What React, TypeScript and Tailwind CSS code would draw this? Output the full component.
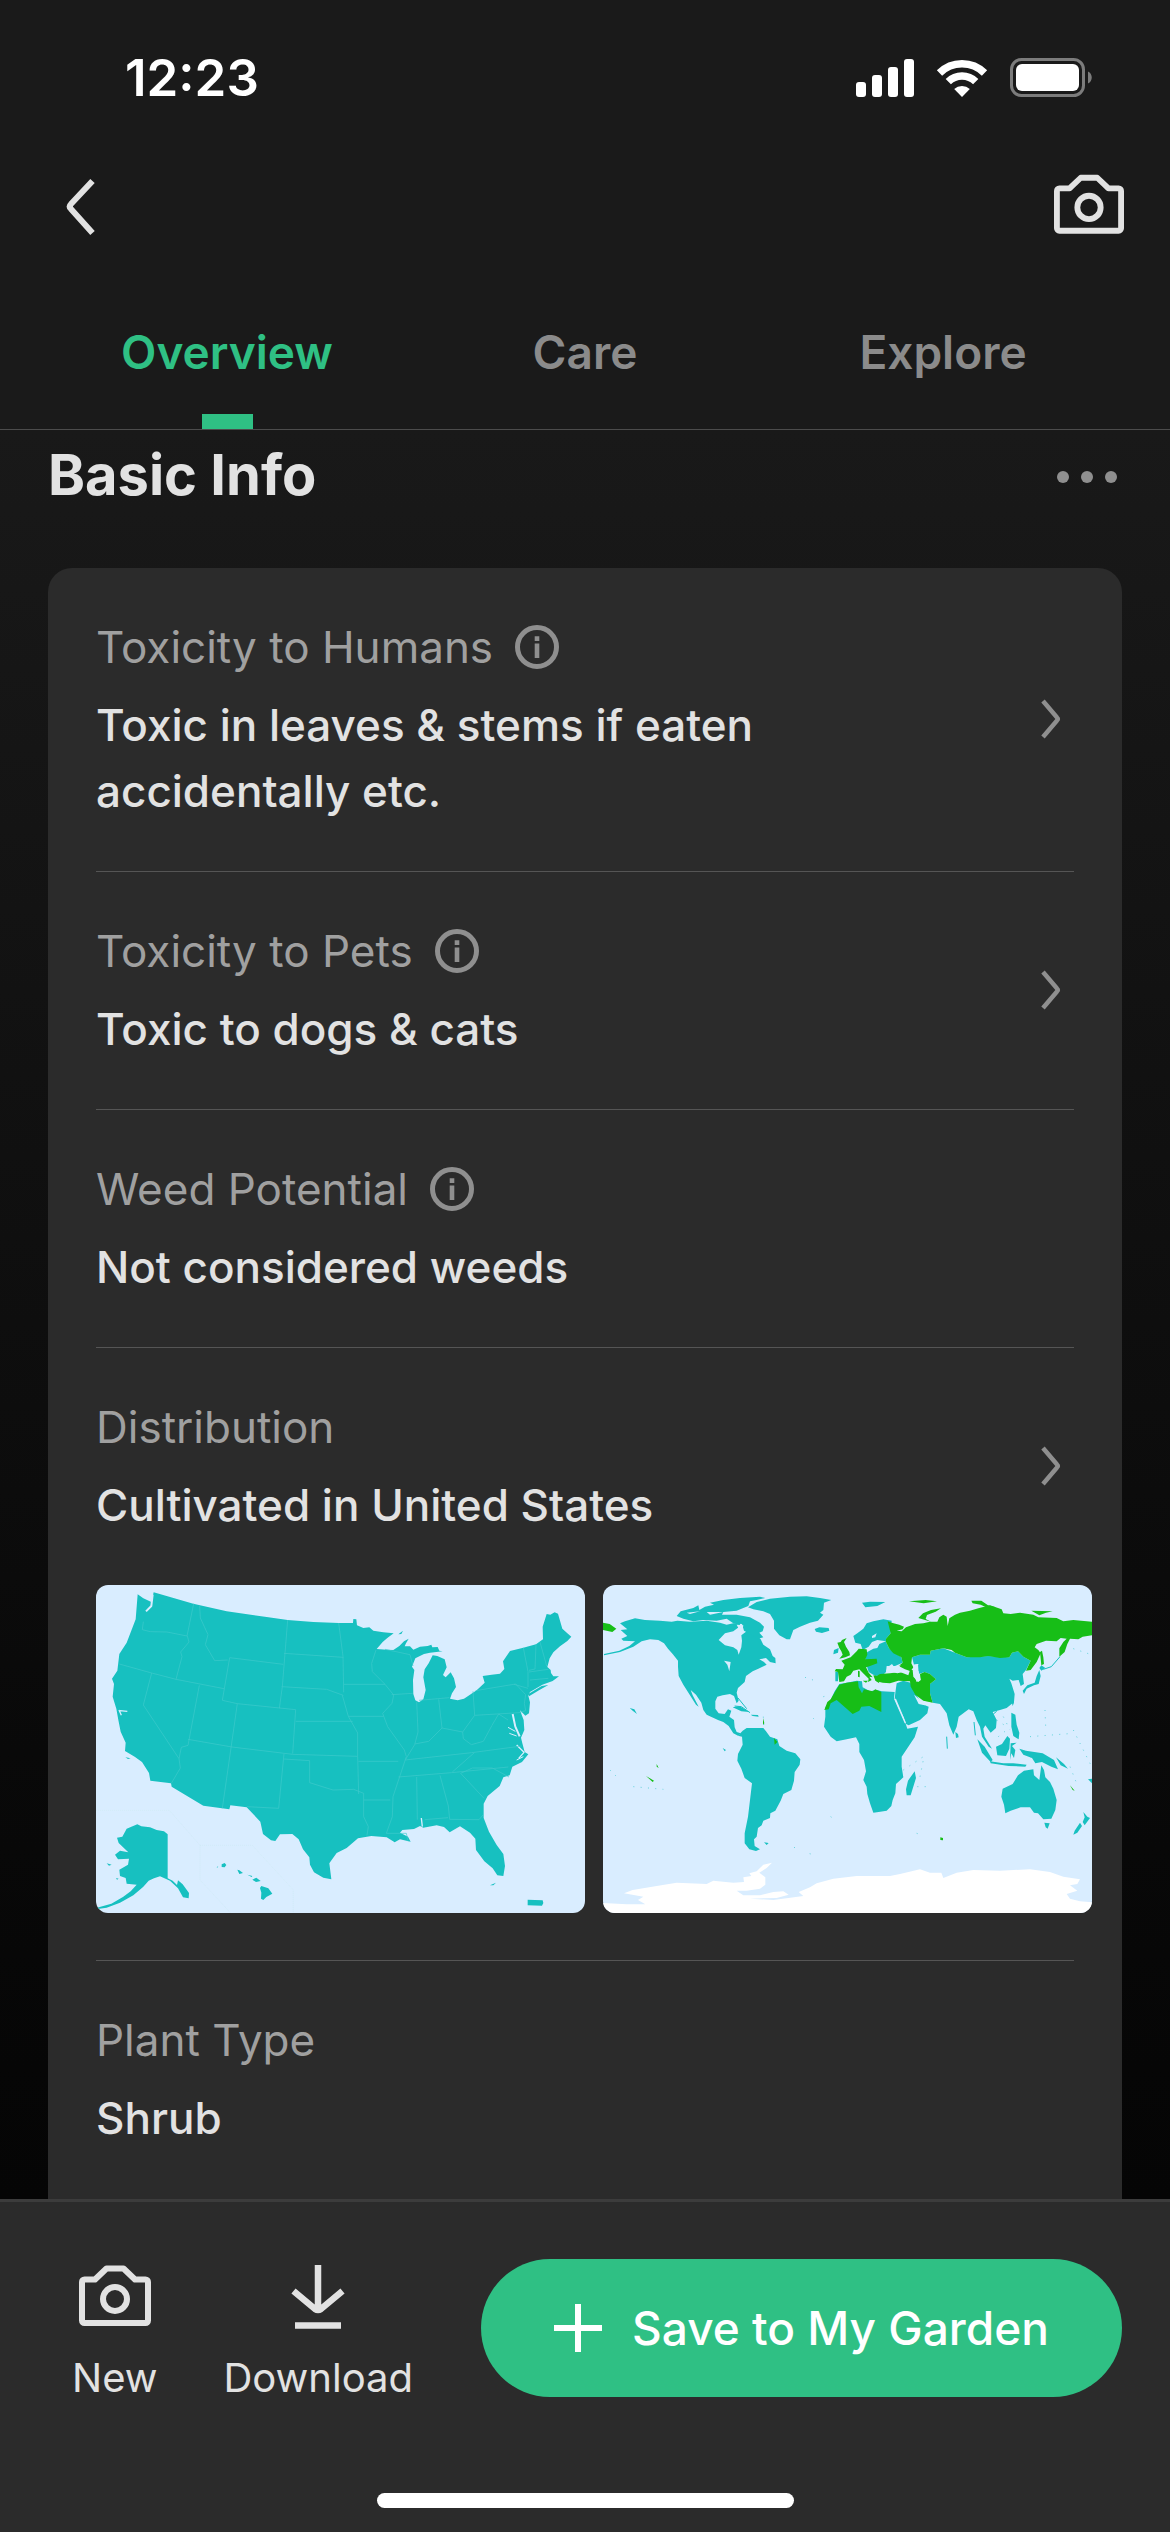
import React from "react";

type IconProps = { className?: string };

function CameraIcon({ className }: IconProps) {
  return (
    <svg viewBox="0 0 72 61" className={className} fill="none" stroke="currentColor" strokeWidth="6" strokeLinejoin="round" aria-hidden="true">
      <path d="M3 17a2.500 2.500 0 0 1 2.500-2.500H16L27.500 3.500h17L56 14.500h10.500A2.500 2.500 0 0 1 69 17v38.500a2.500 2.500 0 0 1-2.500 2.500h-61A2.500 2.500 0 0 1 3 55.500z" />
      <circle cx="36" cy="34" r="12" />
    </svg>
  );
}

function InfoIcon() {
  return (
    <svg viewBox="0 0 44 44" className="size-11" aria-hidden="true">
      <circle cx="22" cy="22" r="19.500" fill="none" stroke="currentColor" strokeWidth="5" />
      <path fill="currentColor" d="M19.700 11.300h4.600V16h-4.600zM19.700 18.500h4.600V33h-4.600z" />
    </svg>
  );
}

function ChevronRight() {
  return (
    <svg viewBox="0 0 20 40" className="h-10 w-5 shrink-0 text-[#8f8f8f]" fill="none" stroke="currentColor" strokeWidth="4.500" aria-hidden="true">
      <path d="M2 2l14 16.500q1.500 1.500 0 3L2 38" />
    </svg>
  );
}

function StatusBar() {
  return (
    <div className="flex h-[156px] items-center justify-between pr-[77px] pl-[125px] text-white">
      <time className="text-[51px] leading-[60px] font-semibold">12:23</time>
      <div className="flex items-center gap-[22px]">
        <svg viewBox="0 0 58 38" className="h-[38px] w-[58px]" fill="currentColor" role="img" aria-label="Signal">
          <rect x="0" y="23" width="10" height="15" rx="3" />
          <rect x="16" y="16" width="10" height="22" rx="3" />
          <rect x="32" y="8" width="10" height="30" rx="3" />
          <rect x="48" y="0" width="10" height="38" rx="3" />
        </svg>
        <svg viewBox="0 0 52 38" className="h-[38px] w-[52px]" role="img" aria-label="Wi-Fi">
          <g fill="none" stroke="currentColor" strokeWidth="7.500">
            <path d="M3.500 14a32 32 0 0 1 45 0" />
            <path d="M12.300 22.700a19.500 19.500 0 0 1 27.400 0" />
          </g>
          <path fill="currentColor" d="M18.200 30a11.500 11.500 0 0 1 15.600 0L26 38z" />
        </svg>
        <svg viewBox="0 0 83 40" className="h-10 w-[83px]" role="img" aria-label="Battery">
          <rect x="1.500" y="1.500" width="72" height="36" rx="10" fill="none" stroke="#7c7c7c" strokeWidth="3" />
          <rect x="6" y="6" width="63" height="27" rx="6" fill="white" />
          <path d="M78 13.500c5 2 5 10 0 12z" fill="#7c7c7c" />
        </svg>
      </div>
    </div>
  );
}

const tabs = ["Overview", "Care", "Explore"];

function Tabs() {
  return (
    <nav role="tablist" className="grid grid-cols-3 border-b border-[#4c4c4c] px-12">
      {tabs.map((name, i) => (
        <button
          key={name}
          role="tab"
          aria-selected={i === 0}
          className="flex h-[153px] flex-col items-center justify-end text-[46px] leading-[60px] font-semibold text-[#8b8b8b] aria-selected:text-[#2fc084]"
        >
          {name}
          <span className={i === 0 ? "mt-[32px] h-[15px] w-[51px] bg-[#2fc084]" : "mt-[32px] h-[15px] w-[51px]"} />
        </button>
      ))}
    </nav>
  );
}

function UsMap() {
  return (
    <svg viewBox="48 45 1467 984" className="block w-full rounded-[12px] bg-[#d9edff]" role="img" aria-label="Map of the United States">
      <g fill="#17c0c0">
        <path d="M173 73L190 85 214 96 221 67 340 101 440 124 560 141 623 150 700 156 776 159 819 159 820 147 829 148 831 166 850 174 868 172 880 182 910 187 941 190 922 204 908 216 890 237 920 239 940 240 958 228 972 214 986 206 978 220 974 229 990 229 1000 239 1020 230 1043 228 1054 224 1057 232 1073 231 1078 242 1088 244 1050 248 1032 252 1006 265 996 290 1003 300 999 330 1000 372 1006 391 1017 397 1030 388 1037 360 1030 322 1034 298 1046 280 1058 256 1072 258 1094 268 1100 292 1089 315 1097 322 1112 307 1122 325 1128 351 1116 370 1110 386 1133 391 1152 386 1190 361 1214 338 1208 318 1235 314 1260 311 1273 297 1269 274 1290 243 1330 233 1368 223 1389 208 1388 170 1400 132 1411 134 1424 127 1434 131 1447 176 1462 190 1474 200 1462 213 1440 229 1420 247 1409 265 1402 291 1412 300 1413 309 1420 319 1437 319 1418 333 1387 344 1350 366 1345 377 1350 397 1347 430 1336 437 1320 421 1331 450 1333 480 1323 503 1327 520 1334 546 1345 553 1326 576 1297 590 1289 616 1270 622 1259 648 1223 678 1211 701 1211 744 1227 785 1250 825 1270 852 1275 888 1270 918 1252 916 1238 895 1213 874 1188 840 1186 806 1170 788 1140 769 1109 787 1092 771 1070 766 1030 773 1020 768 1002 777 967 780 960 788 984 800 992 815 960 808 944 817 920 802 874 798 834 805 800 834 770 849 748 880 754 928 730 923 702 907 690 884 688 862 669 838 656 808 637 792 600 793 586 813 573 811 549 792 541 755 500 712 451 706 448 718 370 707 275 650 273 640 211 632 207 609 186 576 164 560 135 543 137 518 122 485 115 450 109 416 98 380 102 342 96 326 112 302 118 252 140 218 167 148z" />
        <path d="M172 763L184 769 210 772 230 780 252 784 263 793 263 925 278 932 291 945 294 931 308 943 327 969 326 985 309 982 294 955 270 932 240 919 222 925 206 932 190 950 176 962 160 976 120 998 80 1013 48 1018 48 1014 94 1001 130 980 152 964 170 944 140 941 137 924 120 918 118 899 144 884 147 866 114 868 105 854 120 842 145 847 116 819 111 803 127 800 140 776z" />
        <path d="M425 883l9-4 5 6-5 7-9-1zM472 899l6 2 11 8-11 3zM502 914l15 4-2 3zM517 929l12-6 13 10-14 3zM544 948l21 7 12 16-18 10-9 9-7-4 1-18-4-14zM1343 989l45 2 2 8-4 8-43-1zM955 193l14-11-5 10zM80 880l15 4-8 3zM1345 372l40-24 20-3-28 16-30 18zM1230 946l18-8-8 8zM136 562l16 3-8 2zM410 892l5-4-3 5zM108 924l8 2-5 3z" />
      </g>
      <g fill="none" stroke="#d9edff" strokeLinejoin="round">
        <path strokeWidth="6" d="M218 74l-4 34-16 16M1298 432l8 38 13 29" />
        <path strokeWidth="4" d="M117 420l7 16M120 422l22 2M1310 525l22 22-16 18M1024 744l3 26" />
        <path strokeWidth="3" d="M1284 472l22 12M1288 490l22 8M1330 560l-20 10" />
      </g>
      <g fill="none" stroke="#3fcacb" strokeWidth="2">
        <path d="M190 155l-3 24 24 6 50 1 60 12 20-97M322 198l5 18-25 30 4 14-18 68M359 108l2 36 23 50-8 30 28 48 39-2M118 282l97 27 73 19 144 28M215 309l-25 96 107 161M358 346l-34 180-20 6-7 34 4 28-27 46M324 508l132 23 182 22 195 6M449 263l161 20M449 263l-22 128 45 10 175 18M472 401l-45 314M623 150l-16 200-9 65M612 250l178 12M776 159l13 100 2 108M605 350l135 8 50 18M787 376l18 63 28 50v70l3 113M647 419l-9 132M647 454h171M805 439h106M791 343h124M888 240l-13 40 2 25 38 38 26 32-5 25-28 30 15 40 50 70 6 20-40 120-2 60-18 50h60l5 24M612 551l-16 164-95-5M612 567l77 5v66l70 22 62-2 30 12v70l14 30-4 26M835 574h120M851 690h80M955 621l160-13 170-17M975 570l200-22 150-20M915 238l75 16 9 34M935 374l63-4M1010 394l4 92-10 38-27 44M1076 388l10 86-40 40-42 8M1017 391l91-8M1086 474l62 12 36-50-5-72M1187 362l120-20 30 32-4 26 4 22-20 6-133 8M1148 486l2 20 24 18 36-10 26-48 20-34 28 18M1010 621l2 128M1080 616l25 92 4 40 88 1 12-14M1034 749l70-6M1117 606l66-58M1142 610l35-16h60l50 27M1142 610l70 75M1330 233l14 72v46M1368 223l-3 74-18 4M1380 216l20 72M1347 306l58-8M1350 330l55-5M1302 343l42 12" />
      </g>
      <path fill="none" stroke="#c3e8e6" strokeWidth="1" strokeDasharray="3 3" d="M48 721h220l92 105h157l123 134v69M360 826v104l92 99" />
    </svg>
  );
}

function WorldMap() {
  return (
    <svg viewBox="39 45 1467 984" className="block w-full rounded-[12px] bg-[#d9edff]" role="img" aria-label="World distribution map">
      <path fill="#fff" d="M39 999L110 1003H166L144 990 160 980 102 970 128 960 200 948 260 938 350 942 370 932 430 938 462 936 460 922 484 918 478 910 500 904 520 884 546 878 530 894 508 908 526 922 526 944 510 956 470 962 440 962 460 976 510 976 550 966 580 964 596 974 560 984 480 986 550 990 640 978 626 966 660 952 680 940 730 926 800 918 900 918 930 912 990 898 1020 908 1054 908 1060 924 1100 908 1150 900 1230 902 1320 898 1380 906 1420 920 1470 928 1462 942 1440 946 1462 962 1430 972 1440 986 1470 994 1506 997V1029H39z" />
      <g fill="#17c0c0">
        <path d="M90 160L105 154 135 145 165 150 210 152 245 155 262 152 300 155 350 152 390 158 410 164 430 160 452 158 446 172 430 184 405 190 386 210 405 226 430 232 442 240 446 254 454 232 456 212 454 196 470 184 480 190 505 200 512 208 520 224 540 238 548 258 556 264 557 280 540 276 528 264 508 268 522 276 530 284 505 296 488 304 468 318 464 336 444 354 440 368 446 392 440 400 432 378 420 372 398 376 382 380 376 394 376 416 386 430 404 432 414 418 424 422 418 440 432 450 434 472 440 486 452 490 444 497 430 490 416 468 400 456 384 450 350 434 340 420 334 398 318 374 302 360 308 376 326 410 318 404 300 376 290 360 280 344 266 318 264 290 264 272 248 252 234 236 222 220 205 210 180 208 155 214 130 230 90 246 42 256 42 252 88 242 118 228 135 214 100 212 94 206 112 198 92 180 112 178z" />
        <path d="M260 138L272 124 310 114 325 106 328 120 345 110 372 104 360 98 400 90 450 84 510 80 526 84 500 90 480 94 475 108 460 114 440 122 400 126 396 134 440 134 480 142 510 158 522 170 518 184 508 188 520 202 505 206 480 192 462 182 456 162 430 160 410 146 380 152 340 150 310 154 280 146z" />
        <path d="M474 112L500 96 540 86 600 80 650 79 690 84 724 90 702 98 700 120 690 128 700 134 684 152 660 158 630 170 610 180 600 208 590 208 568 196 552 176 552 152 540 132 520 124 490 118z" />
        <path d="M444 497L458 482 470 474 492 474 520 474 528 484 540 500 562 508 568 528 590 542 616 550 631 568 629 584 614 606 612 632 604 660 580 672 572 692 556 722 541 730 540 744 520 752 515 766 504 774 500 800 492 808 494 828 510 838 498 843 478 838 464 820 464 790 474 740 480 690 486 640 464 624 454 596 442 572 444 552 458 524 456 500z" />
        <path d="M748 342L770 338 800 332 816 334 818 352 840 364 860 360 876 364 914 366 912 384 930 424 948 464 952 476 984 470 974 502 950 538 935 560 935 590 940 622 918 642 916 670 908 690 904 708 890 722 866 726 850 728 840 700 832 672 830 650 820 630 828 604 822 570 808 546 808 522 798 502 770 508 740 514 722 500 702 470 706 440 706 412 722 390 734 364z" />
        <path d="M916 368L920 340 940 332 962 338 965 352 980 376 996 402 1016 410 1012 430 990 450 956 466 948 462 940 440 925 410 914 388z" />
        <path d="M966 262L990 254 1020 254 1022 242 1060 235 1095 248 1130 262 1195 258 1258 262 1266 248 1284 244 1300 260 1322 272 1308 300 1298 312 1302 342 1292 348 1286 330 1268 332 1258 326 1264 340 1274 372 1272 396 1250 414 1230 420 1208 426 1220 450 1218 474 1202 488 1186 466 1180 476 1184 500 1196 520 1206 536 1196 530 1176 500 1170 470 1160 450 1150 424 1136 418 1106 440 1100 470 1090 494 1078 466 1070 430 1050 402 1028 398 1020 370 1020 342 1038 328 1020 312 1004 306 986 312 984 282 972 284z" />
        <path d="M790 198L802 190 820 176 830 160 850 154 880 148 905 152 902 190 888 206 888 216 898 236 934 262 938 278 915 288 890 288 888 306 878 316 856 318 836 306 828 280 825 262 832 246 850 236 862 234 868 222 888 214 862 210 846 216 836 230 818 240 812 222 796 218z" />
        <path d="M674 177l14-5 28 2 2 8-22 7-18-4zM816 98l24-3 46 1-24 12-36 4zM732 240l14-6-2 14-14 5zM119 414l14 4 8 14-12-9zM398 534l10 6-4 4zM522 817l14 2-6 6zM428 412l20-4 30 18-24-2zM482 434l22 1 2 5-18-2zM736 306l9 0-1 28-8 0z" />
        <path d="M974 604l4 20-16 52-12 0-2-18 6-26zM1348 300L1352 318 1346 342 1332 346 1310 356 1302 372 1298 362 1312 346 1334 338 1340 318zM1348 294l6-8 12 8-12 8zM1268 408l4-10-2-12-4 14zM1264 428l12 6 4 30 8 24-2 20-16-10-6-28zM1162 508l22 22 24 40-6 6-26-28zM1200 574l40 6 30 0 40 4-4 6-50-2-54-8zM1218 530l18-8 16-24 8 8-2 30-10 22-26-2zM1262 520l18-2-14 10 10 12-4 24-8-14-4 20zM1288 536l20 6 50 8 34 20 12 28-20-8-28-14-20 4-10-16-26-10zM1398 562l24 20 12 14-22-10zM1096 486l8 6 2 10-8 2zM1363 758l16 2-6 16-6-4zM1480 726l12 14 8 4-16 22-6-10 6-14zM1470 758l6 10-14 20-12 6 4-12zM1494 628l12-2v14z" />
        <path d="M1302 602L1330 598 1332 616 1348 630 1354 586 1362 600 1366 622 1380 636 1390 656 1400 690 1396 720 1384 746 1360 748 1344 730 1332 728 1320 712 1292 712 1262 722 1246 730 1242 704 1234 680 1238 656 1268 642 1284 616z" />
      </g>
      <g fill="#17be17">
        <path d="M893 154L905 158 928 164 942 170 938 178 920 182 935 184 948 172 965 166 975 162 1000 160 1020 155 1042 155 1048 142 1060 134 1070 140 1073 168 1078 145 1095 134 1110 128 1140 122 1165 115 1200 106 1235 118 1240 130 1262 132 1290 128 1330 134 1345 142 1400 144 1420 154 1450 150 1506 155V196L1478 200 1465 208 1440 206 1432 222 1424 246 1408 260 1408 235 1420 216 1430 206 1412 204 1400 214 1368 212 1340 222 1334 232 1345 240 1352 250 1340 276 1322 300 1308 302 1322 272 1300 260 1284 244 1266 248 1258 262 1230 264 1195 258 1170 262 1130 262 1095 248 1085 240 1060 235 1022 242 1020 254 990 254 966 262 964 280 970 292 962 304 945 298 926 288 938 278 934 262 910 250 898 236 888 216 888 206 902 190z" />
        <path d="M856 320L870 312 900 310 930 306 955 316 960 300 968 300 970 320 985 336 992 330 990 312 1004 306 1020 312 1038 328 1020 342 1020 370 1028 398 1000 392 976 374 962 350 960 334 925 332 900 340 878 338 860 334z" />
        <path d="M703 420L712 396 722 388 736 364 748 344 770 338 804 334 806 352 816 370 822 358 848 364 856 358 874 366 874 426 838 408 814 410 808 422 788 432 740 390 722 400 716 418z" />
        <path d="M754 272L782 262 800 244 806 236 830 238 832 254 826 268 860 266 862 280 840 288 828 292 836 308 848 322 838 320 845 330 834 336 836 326 818 308 808 298 790 302 782 314 770 320 762 334 748 336 744 306 734 304 738 297 758 298 764 284z" />
        <path d="M985 144l14-14 24-10 30-5-16 10-26 10-4 12 16 8zM957 94l50-4 34 4-40 6zM1144 92l30 0 20 14 24 6-20 4-26-12-24-4zM1324 122l64 2-20 4-20 8zM39 158l20 4 20 14-12 10-28-6zM742 218l10-2 4-6 14-6-8 12 6 14 10 16 2 10-14 6-18 4 10-12-4-10-6-10zM1350 246l6-4 4 20 2 20-8 4zM850 316l12 2 6 22-12-8zM552 504l10 12-8 8zM168 618l24 14-4 4zM1440 646l14 16-6-2zM1051 802l8 2 0 7-8-1zM200 582l6 12-6-4zM519 444l4 16-4 4zM818 332l16 0-6 6zM804 302l5 2 0 18-5-2z" />
      </g>
      <g fill="#d9edff">
        <path d="M888 304l6-14 12-8 6 8 20-4-6 8 14 12-18 4-16-4zM970 284l16-2-10 14 10 8 6 26-12 6-8-20zM912 386l6 0 30 72-4 2zM972 374l24 20 26 4-18 8-18-4zM846 198l14-8-4 12-10 2zM402 272l20 4-4 28-6-20zM440 164l20 2-2 12-12-2zM290 128l40-4-30 8zM350 126l50 0-40 8z" />
      </g>
      <g fill="none" stroke="#17c0c0">
        <path strokeWidth="3" d="M1360 298l24-8 26-30M1210 432l10-8M1152 456l4 40M1070 500l2 36M434 408l20 2 26 18M444 384l26 32" />
        <path strokeWidth="3" strokeDasharray="3 19" opacity=".6" d="M1450 480l30 60 25 50M1440 590l20 50M1320 500l130-10M1365 420l2 50M60 600l20 20M130 650l90 8M645 322l30 10M940 600l60-40M960 650l60 0M990 620l10-50M1450 236l54 18M520 440l2 40M660 850l4 14M612 832l16 6M1220 450l30 20M1225 500l30-24M1240 440l20 40M670 445l8 8M700 380l18-4M1268 440l10 60M1320 560l30 30M980 790l6 2M722 740l6 4" />
      </g>
    </svg>
  );
}

type Fact = { label: string; value: string; info?: boolean; link?: boolean; maps?: boolean };

const facts: Fact[] = [
  { label: "Toxicity to Humans", value: "Toxic in leaves & stems if eaten accidentally etc.", info: true, link: true },
  { label: "Toxicity to Pets", value: "Toxic to dogs & cats", info: true, link: true },
  { label: "Weed Potential", value: "Not considered weeds", info: true },
  { label: "Distribution", value: "Cultivated in United States", link: true, maps: true },
  { label: "Plant Type", value: "Shrub" },
];

function FactRow({ fact }: { fact: Fact }) {
  return (
    <li className="border-b border-[#555555] pt-[46px] pb-[47px] last:border-b-0">
      <div className="flex items-center justify-between pr-[13px]">
        <dl className="flex w-[720px] flex-col gap-3 text-[44px] leading-[66px]">
          <dt className="flex items-center gap-[22px] text-[#a0a0a0]">
            {fact.label}
            {fact.info && (
              <button aria-label={`About ${fact.label}`} className="text-[#8f8f8f]">
                <InfoIcon />
              </button>
            )}
          </dt>
          <dd className="font-medium text-[#e2e2e2]">{fact.value}</dd>
        </dl>
        {fact.link && (
          <button aria-label={`Open ${fact.label}`}>
            <ChevronRight />
          </button>
        )}
      </div>
      {fact.maps && (
        <div className="-mr-[18px] mt-[47px] grid grid-cols-2 gap-[18px]">
          <UsMap />
          <WorldMap />
        </div>
      )}
    </li>
  );
}

export default function App() {
  return (
    <div className="flex min-h-screen flex-col bg-[#1a1a1a] font-['Inter',sans-serif] text-[#e2e2e2]">
      <header>
        <StatusBar />
        <div className="flex h-[120px] items-start justify-between pt-[18px] pr-[46px] pl-[65px]">
          <button aria-label="Back" className="pt-1">
            <svg viewBox="0 0 32 58" className="h-[58px] w-8" fill="none" stroke="currentColor" strokeWidth="6" aria-hidden="true">
              <path d="M27.500 3L6 26q-2.500 2.500 0 5L27.500 55" />
            </svg>
          </button>
          <button aria-label="Take photo">
            <CameraIcon className="h-[60px] w-[70px]" />
          </button>
        </div>
        <Tabs />
      </header>

      <main className="flex flex-1 flex-col bg-linear-to-b from-[#191919] to-[#050505] px-12">
        <div className="flex h-[138px] items-start justify-between pt-[9px] pr-[5px]">
          <h1 className="text-[56px] leading-[72px] font-bold">Basic Info</h1>
          <button aria-label="More options" className="flex h-[76px] items-center gap-3">
            <span className="size-3 rounded-full bg-[#8f8f8f]" />
            <span className="size-3 rounded-full bg-[#8f8f8f]" />
            <span className="size-3 rounded-full bg-[#8f8f8f]" />
          </button>
        </div>
        <ul className="flex-1 rounded-t-[24px] bg-[#2b2b2b] px-12">
          {facts.map((fact) => (
            <FactRow key={fact.label} fact={fact} />
          ))}
        </ul>
      </main>

      <footer className="sticky bottom-0 border-t-[3px] border-[#3c3c3c] bg-[#2b2b2b]">
        <div className="flex items-start pt-[57px] pr-12 pl-[72px]">
          <button className="flex flex-col items-center gap-6 pt-[6px] text-[40px] leading-[56px]">
            <CameraIcon className="h-[61px] w-[72px]" />
            New
          </button>
          <button className="ml-[66px] flex flex-col items-center gap-[21px] pt-[6px] text-[40px] leading-[56px]">
            <svg viewBox="0 0 54 64" className="h-[64px] w-[54px]" fill="none" stroke="currentColor" strokeWidth="6.500" aria-hidden="true">
              <path d="M27 0v45M2.500 26L24 44q3 2 6 0L51.500 26M4 60.500h46" />
            </svg>
            Download
          </button>
          <button className="ml-auto flex h-[138px] w-[641px] items-center justify-center gap-[30px] rounded-full bg-[#2fc084] text-[46px] leading-[60px] font-medium text-white">
            <svg viewBox="0 0 48 48" className="size-12" stroke="currentColor" strokeWidth="6" aria-hidden="true">
              <path d="M24 0v48M0 24h48" />
            </svg>
            Save to My Garden
          </button>
        </div>
        <div className="mx-auto mt-[87px] mb-6 h-[15px] w-[417px] rounded-full bg-white" />
      </footer>
    </div>
  );
}
